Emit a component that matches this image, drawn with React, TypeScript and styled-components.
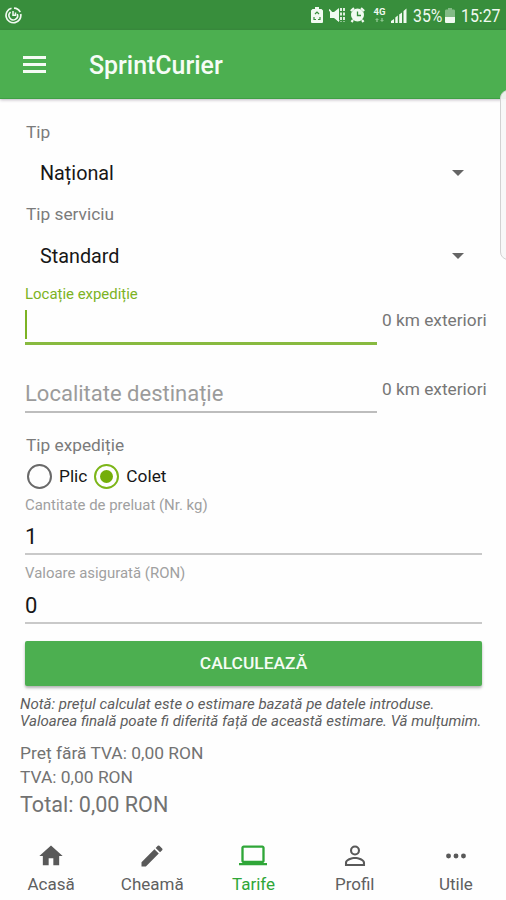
import React from "react";
import styled, { createGlobalStyle } from "styled-components";

const GlobalStyle = createGlobalStyle`
  * { box-sizing: border-box; }
  body { margin: 0; background: #fefefe; }
`;

const Screen = styled.div`
  position: relative;
  width: 506px;
  height: 900px;
  overflow: hidden;
  display: flex;
  flex-direction: column;
  background: #fefefe;
  font-family: Roboto, "Noto Sans", sans-serif;
  color: #6f6f6f;
  white-space: nowrap;
`;

const StatusBar = styled.header`
  flex: none;
  height: 30px;
  padding: 0 6px 0 5px;
  display: flex;
  align-items: center;
  background: #388e3c;
  color: #f1faf1;
  svg { display: block; flex: none; }
`;

const StatusIcons = styled.div`
  margin-left: auto;
  display: flex;
  align-items: center;
`;

const Gap = styled.span<{ $w: number }>`
  flex: none;
  width: ${(p) => p.$w}px;
`;

const StatusText = styled.span<{ $w: number }>`
  flex: none;
  width: ${(p) => p.$w}px;
  height: 30px;
  line-height: 32px;
  font-size: 18px;
  span {
    display: inline-block;
    transform: scaleX(0.88);
    transform-origin: 0 50%;
  }
`;

const AppBar = styled.div`
  flex: none;
  height: 69px;
  display: flex;
  align-items: center;
  padding-left: 23px;
  background: #4caf50;
  border-bottom: 1px solid #3fa044;
  box-shadow: 0 1px 3px rgba(60, 40, 70, 0.32);
  z-index: 1;
`;

const MenuButton = styled.button`
  width: 23px;
  height: 17px;
  padding: 0;
  border: 0;
  background: none;
  display: flex;
  flex-direction: column;
  justify-content: space-between;
`;

const MenuLine = styled.span`
  width: 23px;
  height: 3px;
  background: #f4fbf4;
`;

const Title = styled.h1`
  margin: 3px 0 0 43px;
  font-size: 24.9px;
  font-weight: 500;
  line-height: 30px;
  color: #f6fcf6;
`;

const Form = styled.main`
  flex: none;
  height: 738px;
  padding: 22px 0 0 25px;
`;

const Label = styled.div<{ $h: number; $line?: number }>`
  height: ${(p) => p.$h}px;
  line-height: ${(p) => p.$line ?? p.$h}px;
  padding-left: 1px;
  font-size: 17.3px;
  color: #7b7b7b;
`;

const Select = styled.div`
  width: 457px;
  height: 60px;
  padding: 0 18px 0 15px;
  display: flex;
  align-items: center;
  justify-content: space-between;
  font-size: 19.8px;
  color: #171717;
`;

const Arrow = styled.span`
  border: 6px solid transparent;
  border-top-color: #656565;
  border-bottom: 0;
`;

const LocationRow = styled.div<{ $h: number }>`
  height: ${(p) => p.$h}px;
  display: flex;
  align-items: flex-end;
`;

const Field = styled.div`
  flex: none;
  width: 352px;
`;

const Distance = styled.div<{ $bottom: number }>`
  margin-left: 5px;
  margin-bottom: ${(p) => p.$bottom}px;
  font-size: 17.3px;
  line-height: 20px;
  color: #777;
`;

const FieldLabel = styled.div<{ $h: number; $active?: boolean }>`
  height: ${(p) => p.$h}px;
  line-height: ${(p) => p.$h}px;
  font-size: 14.95px;
  color: ${(p) => (p.$active ? "#7cb324" : "#a0a0a0")};
`;

const ActiveInput = styled.div`
  height: 43px;
  padding-top: 8px;
  border-bottom: 3px solid #88ba40;
`;

const Caret = styled.div`
  width: 2px;
  height: 29px;
  background: #7cb324;
`;

const Input = styled.div<{ $h: number; $empty?: boolean; $line: number }>`
  flex: none;
  height: ${(p) => p.$h}px;
  line-height: ${(p) => p.$line}px;
  width: ${(p) => (p.$empty ? "352px" : "457px")};
  border-bottom: 2px solid ${(p) => (p.$empty ? "#bdbdbd" : "#c9c9c9")};
  font-size: 22px;
  color: ${(p) => (p.$empty ? "#9b9b9b" : "#171717")};
`;

const Radios = styled.div`
  height: 38px;
  padding-left: 2px;
  display: flex;
  align-items: center;
  font-size: 17.3px;
  color: #171717;
`;

const Radio = styled.span<{ $on?: boolean }>`
  width: 25px;
  height: 25px;
  margin-left: ${(p) => (p.$on ? 7 : 0)}px;
  margin-right: 7px;
  border-radius: 50%;
  border: 2.5px solid ${(p) => (p.$on ? "#7cb518" : "#696969")};
  display: flex;
  align-items: center;
  justify-content: center;
  &::after {
    content: "";
    width: 13px;
    height: 13px;
    border-radius: 50%;
    background: ${(p) => (p.$on ? "#74ae09" : "transparent")};
  }
`;

const Submit = styled.button`
  display: block;
  width: 457px;
  height: 45px;
  margin-top: 17px;
  padding: 0;
  border: 0;
  border-radius: 2px;
  background: #4caf50;
  box-shadow: 0 2px 3px rgba(0, 0, 0, 0.3);
  color: #f5fcf5;
  font: 500 17.4px/45px Roboto, sans-serif;
`;

const Note = styled.p`
  margin: 10px 0 0 -5px;
  font-size: 15.06px;
  line-height: 17.4px;
  font-style: italic;
  color: #5d5d5d;
`;

const Price = styled.div<{ $size: number; $h: number; $top?: number }>`
  margin: ${(p) => p.$top ?? 0}px 0 0 -5px;
  font-size: ${(p) => p.$size}px;
  line-height: ${(p) => p.$h}px;
  color: #727272;
`;

const Nav = styled.nav`
  flex: 1;
  display: grid;
  grid-template-columns: repeat(5, 1fr);
  color: #606060;
`;

const NavItem = styled.a<{ $active?: boolean }>`
  display: flex;
  flex-direction: column;
  align-items: center;
  padding: 5px 0 0 1px;
  font-size: 17px;
  line-height: 22px;
  color: ${(p) => (p.$active ? "#2fa638" : "inherit")};
  svg {
    display: block;
    margin-bottom: 3px;
    fill: ${(p) => (p.$active ? "#2fa638" : "#595959")};
  }
`;

const EdgePanel = styled.div`
  position: absolute;
  z-index: 2;
  left: 500px;
  top: 90px;
  width: 20px;
  height: 170px;
  border: 1.5px solid #d2d2d2;
  border-radius: 8px;
  background: rgba(248, 248, 248, 0.93);
`;

const tabs = [
  { name: "Acasă", path: "M10 20v-6h4v6h5v-8h3L12 3 2 12h3v8z" },
  {
    name: "Cheamă",
    path: "M3 17.25V21h3.75L17.81 9.94l-3.75-3.75L3 17.25zM20.71 7.04a1 1 0 0 0 0-1.41l-2.34-2.34a1 1 0 0 0-1.41 0l-1.83 1.83 3.75 3.75 1.83-1.83z",
  },
  {
    name: "Tarife",
    path: "M20 18c1.1 0 1.99-.9 1.99-2L22 5c0-1.1-.9-2-2-2H4c-1.1 0-2 .9-2 2v11c0 1.1.9 2 2 2H0v2h24v-2h-4zM4 5h16v11H4V5z",
    active: true,
  },
  {
    name: "Profil",
    path: "M12 3a4.3 4.3 0 1 0 0 8.600a4.3 4.300 0 0 0 0-8.600zm0 1.800a2.500 2.500 0 1 1 0 5a2.500 2.500 0 0 1 0-5zM12 12.800c-2.900 0-8.600 1.500-8.600 4.900V20.600h17.200v-2.900c0-3.400-5.700-4.900-8.600-4.900zm0 1.800c2.900 0 6.800 1.600 6.800 3.100v1.100H5.200v-1.100c0-1.500 3.900-3.100 6.800-3.100z",
  },
  {
    name: "Utile",
    path: "M5.6 9.900a2.100 2.100 0 1 0 0 4.200a2.100 2.100 0 0 0 0-4.200zM12 9.900a2.100 2.100 0 1 0 0 4.200a2.100 2.100 0 0 0 0-4.200zM18.400 9.900a2.100 2.100 0 1 0 0 4.200a2.100 2.100 0 0 0 0-4.200z",
  },
];

function AppBadge() {
  return (
    <svg width="17" height="17" viewBox="0 0 17 17" fill="none" stroke="currentColor">
      <path d="M6.5 1.2A7.4 7.4 0 1 0 15.7 7M9 1.1a7.4 7.4 0 0 1 6.2 4" strokeWidth="1.7" />
      <path d="M5.6 5.2A4.3 4.3 0 1 0 12.3 7" strokeWidth="1.6" />
      <path d="M8 4v4.3h2.5V5.5" strokeWidth="1.5" />
    </svg>
  );
}

function BatterySaver() {
  return (
    <svg width="12" height="16" viewBox="0 0 12 16" fill="currentColor">
      <path d="M4 0h4v2h2.5L12 3.5V15a1 1 0 0 1-1 1H1a1 1 0 0 1-1-1V3.5L1.5 2H4z" />
      <path d="M4 7L6 5L8 7M3 10v2.500H5M9 10v2.500H7" fill="none" stroke="#388e3c" strokeWidth="1.2" />
    </svg>
  );
}

function Muted() {
  return (
    <svg width="16" height="16" viewBox="0 0 16 16" fill="currentColor">
      <path d="M1 5h4l5-4v14l-5-4H1z" />
      <path d="M0 2.500L10 14" stroke="currentColor" strokeWidth="1.500" />
      <path d="M12 1v14M15 1v14" fill="none" stroke="currentColor" strokeWidth="1.800" strokeDasharray="3 1.500" />
    </svg>
  );
}

function Alarm() {
  return (
    <svg width="15" height="16" viewBox="0 0 15 16" fill="currentColor">
      <circle cx="7.5" cy="8" r="6.5" />
      <path d="M.8 4L4 1.2M11 1.2L14.2 4M3 13l-1.500 2M12 13l1.500 2" stroke="currentColor" strokeWidth="2.2" />
      <path d="M7.5 4.5V8.500H11" fill="none" stroke="#388e3c" strokeWidth="1.3" />
    </svg>
  );
}

const NetworkType = styled.div`
  width: 13px;
  height: 16px;
  display: flex;
  flex-direction: column;
  align-items: center;
  font-size: 9.5px;
  font-weight: 700;
  line-height: 10px;
  svg { margin-top: 1px; }
`;

export default function App() {
  return (
    <>
      <GlobalStyle />
      <Screen>
        <StatusBar>
          <AppBadge />
          <StatusIcons>
            <BatterySaver />
            <Gap $w={6} />
            <Muted />
            <Gap $w={5} />
            <Alarm />
            <Gap $w={8} />
            <NetworkType>
              4G
              <svg width="9" height="5" viewBox="0 0 9 5" fill="#8cc58e">
                <path d="M0 2L2 0 4 2H2.7V4H1.3V2zM5 2h1.3V0h1.4V2H9L7 4z" />
              </svg>
            </NetworkType>
            <Gap $w={5} />
            <svg width="16" height="15" viewBox="0 0 16 15" fill="currentColor">
              <path d="M0 15v-2l3-2v4zM4.3 15v-5.500l2.500-2V15zM8.200 15V6.500l2.800-2V15zM12.500 15V3l3-2.500V15z" />
            </svg>
            <Gap $w={6} />
            <StatusText $w={32}><span>35%</span></StatusText>
            <svg width="10" height="15" viewBox="0 0 10 15">
              <path d="M3 0h4v1.5h2.2L10 2.500V9H0V2.500L.8 1.500H3z" fill="#83bb86" />
              <path d="M0 9h10v5.300L9.300 15H.7L0 14.300z" fill="#f1faf1" />
            </svg>
            <Gap $w={6} />
            <StatusText $w={39}><span>15:27</span></StatusText>
          </StatusIcons>
        </StatusBar>
        <AppBar>
          <MenuButton aria-label="Meniu">
            <MenuLine />
            <MenuLine />
            <MenuLine />
          </MenuButton>
          <Title>SprintCurier</Title>
        </AppBar>
        <Form>
          <Label $h={22}>Tip</Label>
          <Select>Național<Arrow /></Select>
          <Label $h={23}>Tip serviciu</Label>
          <Select>Standard<Arrow /></Select>
          <LocationRow $h={59}>
            <Field>
              <FieldLabel $h={16} $active>Locație expediție</FieldLabel>
              <ActiveInput><Caret /></ActiveInput>
            </Field>
            <Distance $bottom={15}>0 km exteriori</Distance>
          </LocationRow>
          <LocationRow $h={68}>
            <Input $h={38} $line={37} $empty>Localitate destinație</Input>
            <Distance $bottom={14}>0 km exteriori</Distance>
          </LocationRow>
          <Label $h={44} $line={64}>Tip expediție</Label>
          <Radios>
            <Radio />
            Plic
            <Radio $on />
            Colet
          </Radios>
          <FieldLabel $h={20}>Cantitate de preluat (Nr. kg)</FieldLabel>
          <Input $h={40} $line={44}>1</Input>
          <FieldLabel $h={37}>Valoare asigurată (RON)</FieldLabel>
          <Input $h={32} $line={28}>0</Input>
          <Submit>CALCULEAZĂ</Submit>
          <Note>
            Notă: prețul calculat este o estimare bazată pe datele introduse.
            <br />
            Valoarea finală poate fi diferită față de această estimare. Vă mulțumim.
          </Note>
          <Price $size={17.4} $h={24} $top={10}>Preț fără TVA: 0,00 RON</Price>
          <Price $size={17.4} $h={24}>TVA: 0,00 RON</Price>
          <Price $size={21.6} $h={31}>Total: 0,00 RON</Price>
        </Form>
        <Nav>
          {tabs.map((tab) => (
            <NavItem key={tab.name} $active={tab.active}>
              <svg width="28" height="28" viewBox="0 0 24 24">
                <path d={tab.path} />
              </svg>
              {tab.name}
            </NavItem>
          ))}
        </Nav>
        <EdgePanel />
      </Screen>
    </>
  );
}
